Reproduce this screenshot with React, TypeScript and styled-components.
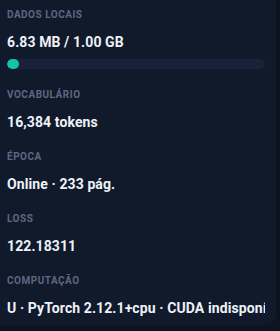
import React from "react";
import styled, { createGlobalStyle } from "styled-components";

const Global = createGlobalStyle`
  html, body { margin: 0; padding: 0; background: #0d1320; }
  body { font-family: Roboto, "Liberation Sans", sans-serif; }
`;

const Card = styled.div`
  width: 276px;
  height: 325px;
  box-sizing: border-box;
  background: #111a2b;
  border-radius: 0 0 10px 0;
  padding: 9px 11px 0 7px;
  display: flex;
  flex-direction: column;
  overflow: hidden;
`;

const Section = styled.div<{ $tall?: boolean }>`
  display: flex;
  flex-direction: column;
  height: ${(p) => (p.$tall ? "80px" : "62px")};
  flex-shrink: 0;
`;

const Label = styled.div`
  font-size: 10px;
  line-height: 12px;
  font-weight: 700;
  letter-spacing: 0.5px;
  text-transform: uppercase;
  color: #5b6882;
`;

const Value = styled.div`
  margin-top: 13px;
  font-size: 14px;
  line-height: 16px;
  font-weight: 700;
  letter-spacing: 0.1px;
  color: #eef2f8;
  white-space: nowrap;
  overflow: hidden;
`;

const Track = styled.div`
  margin-top: 9px;
  height: 10px;
  border-radius: 5px;
  background: #18233a;
  overflow: hidden;
  width: 258px;
`;

const Fill = styled.div`
  height: 100%;
  border-radius: 5px;
  background: #14c4a6;
`;

export default function App() {
  return (
    <>
      <Global />
      <Card>
        <Section $tall>
          <Label>Dados locais</Label>
          <Value>6.83 MB / 1.00 GB</Value>
          <Track>
            <Fill style={{ width: "12px" }} />
          </Track>
        </Section>
        <Section>
          <Label>Vocabulário</Label>
          <Value>16,384 tokens</Value>
        </Section>
        <Section>
          <Label>Época</Label>
          <Value>Online · 233 pág.</Value>
        </Section>
        <Section>
          <Label>Loss</Label>
          <Value>122.18311</Value>
        </Section>
        <Section>
          <Label>Computação</Label>
          <Value>U · PyTorch 2.12.1+cpu · CUDA indisponível</Value>
        </Section>
      </Card>
    </>
  );
}
